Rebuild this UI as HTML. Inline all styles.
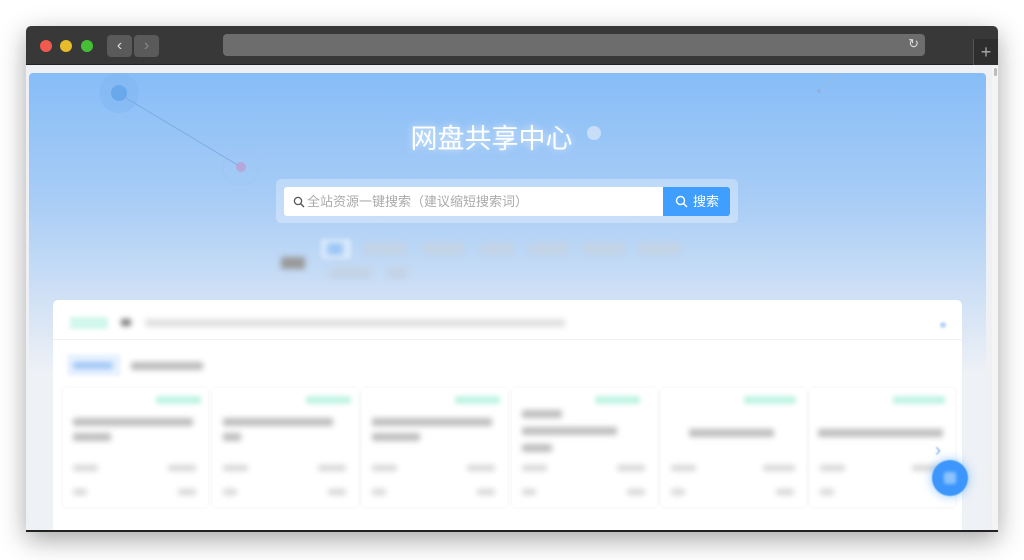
<!DOCTYPE html>
<html><head><meta charset="utf-8"><style>
*{margin:0;padding:0;box-sizing:border-box}
body{width:1024px;height:560px;background:#fff;position:relative;overflow:hidden;font-family:"Liberation Sans","Noto Sans CJK SC",sans-serif}
.win{position:absolute;left:26px;top:26px;width:972px;height:506px;background:#eef0f4;box-shadow:0 8px 26px rgba(0,0,0,.35);border-radius:5px 5px 0 0;overflow:hidden}
.bar{position:absolute;left:0;top:0;width:972px;height:39px;background:#383838;border-bottom:1px solid #222}
.dot{position:absolute;top:14px;width:12px;height:12px;border-radius:50%}
.nav{position:absolute;top:9px;width:25px;height:22px;background:#5a5a5a;border-radius:4px;color:#ddd;font-size:16px;text-align:center;line-height:21px}
.url{position:absolute;left:197px;top:8px;width:702px;height:22px;background:#6d6d6d;border-radius:4px}
.plus{position:absolute;left:947px;top:13px;width:25px;height:26px;background:#2e2e2e;border-left:1px solid #555;color:#aaa;font-size:18px;text-align:center;line-height:26px}
.hero{position:absolute;left:3px;top:47px;width:957px;height:460px;background:linear-gradient(#87bdf7 0px,#a9cdf6 130px,#dae6f5 250px,#eef1f6 300px);border-radius:4px}
.title{position:absolute;left:-16px;width:100%;top:44px;text-align:center;color:#fff;font-size:27px;letter-spacing:0px;text-shadow:0 0 8px rgba(255,255,255,.7)}
.sbox{position:absolute;left:247px;top:106px;width:462px;height:44px;background:rgba(255,255,255,.3);border-radius:5px}
.inp{position:absolute;left:8px;top:8px;width:380px;height:29px;background:#fff;border-radius:3px 0 0 3px;color:#aaa;font-size:13px;line-height:29px;padding-left:23px}
.btn{position:absolute;left:387px;top:8px;width:67px;height:29px;background:#409eff;border-radius:0 3px 3px 0;color:#fff;font-size:13px;line-height:29px;padding-left:30px}
.tag{position:absolute;height:12px;background:#c3d3e6;border-radius:2px;filter:blur(3px)}
.panel{position:absolute;left:27px;top:227px;width:909px;height:240px;background:#fff;border-radius:5px}
.card{position:absolute;top:88px;width:145px;height:119px;background:#fff;box-shadow:0 0 5px rgba(0,0,0,.06);border-radius:4px}
.g{position:absolute;background:#d6d6d6;filter:blur(2.8px);border-radius:2px}
.gr{position:absolute;background:#c2f4e5;filter:blur(2.5px);border-radius:2px}
</style></head><body>
<div class="win">
 <div class="bar">
  <div class="dot" style="left:14px;background:#f05a4f"></div>
  <div class="dot" style="left:34px;background:#e5bc2a"></div>
  <div class="dot" style="left:55px;background:#45c035"></div>
  <div class="nav" style="left:81px">&#8249;</div>
  <div class="nav" style="left:108px;color:#888">&#8250;</div>
  <div class="url"><span style="position:absolute;right:6px;top:2px;color:#ddd;font-size:13px">&#8635;</span></div>
  <div class="plus">+</div>
 </div>
 <div style="position:absolute;right:0;top:40px;width:6px;height:466px;background:#f4f4f4"></div>
 <div style="position:absolute;right:1px;top:42px;width:3px;height:8px;background:#bbb;border-radius:2px"></div>
 <div class="hero">
  <svg width="957" height="300" style="position:absolute;left:0;top:0">
   <circle cx="90" cy="20" r="20" fill="#7fb6f2" opacity=".5"/>
   <circle cx="90" cy="20" r="8" fill="#6aa8ec"/>
   <line x1="92" y1="22" x2="212" y2="94" stroke="#7aa7e0" stroke-width=".8"/>
   <circle cx="212" cy="94" r="18" fill="none" stroke="#9fc3ee" stroke-width=".6"/>
   <circle cx="212" cy="94" r="5" fill="#b4a8d9"/>
   <circle cx="565" cy="60" r="7" fill="#c8def8"/>
   <circle cx="790" cy="18" r="2" fill="#8fb0db"/>
   <line x1="790" y1="18" x2="815" y2="-5" stroke="#9fbce2" stroke-width=".6"/>
  </svg>
  <div class="title">网盘共享中心</div>
  <div class="sbox">
   <div class="inp"><svg width="12" height="12" style="position:absolute;left:9px;top:9px"><circle cx="5" cy="5" r="3.6" fill="none" stroke="#555" stroke-width="1.3"/><line x1="7.7" y1="7.7" x2="11" y2="11" stroke="#555" stroke-width="1.4"/></svg>全站资源一键搜索（建议缩短搜索词）</div>
   <div class="btn"><svg width="13" height="13" style="position:absolute;left:12px;top:8px"><circle cx="5.5" cy="5.5" r="4" fill="none" stroke="#fff" stroke-width="1.4"/><line x1="8.5" y1="8.5" x2="12" y2="12" stroke="#fff" stroke-width="1.5"/></svg>搜索</div>
  </div>
  <div class="tag" style="left:252px;top:184px;width:24px;background:#999"></div>
  <div style="position:absolute;left:292px;top:166px;width:30px;height:20px;background:#d9e9fc;border-radius:3px;filter:blur(2px)"></div>
  <div class="tag" style="left:298px;top:170px;width:16px;background:#9cc6f5"></div>
  <div class="tag" style="left:335px;top:170px;width:42px"></div>
  <div class="tag" style="left:393px;top:170px;width:42px"></div>
  <div class="tag" style="left:452px;top:170px;width:32px"></div>
  <div class="tag" style="left:500px;top:170px;width:40px"></div>
  <div class="tag" style="left:553px;top:170px;width:42px"></div>
  <div class="tag" style="left:610px;top:170px;width:42px"></div>
  <div class="tag" style="left:300px;top:194px;width:42px"></div>
  <div class="tag" style="left:358px;top:194px;width:20px"></div>
 </div>
 <div class="panel" style="left:27px;top:274px">
  <div style="position:absolute;left:0;top:0;width:909px;height:40px;border-bottom:1px solid #f2f2f2"></div>
  <div style="position:absolute;left:17px;top:17px;width:38px;height:12px;background:#d2f7ec;filter:blur(2px)"></div>
  <div class="g" style="left:68px;top:19px;width:10px;height:7px;background:#777"></div>
  <div class="g" style="left:92px;top:19px;width:420px;height:8px;background:#e0e0e0"></div>
  <div style="position:absolute;left:887px;top:22px;width:6px;height:6px;background:#b8d4f8;border-radius:50%;filter:blur(1px)"></div>
  <div style="position:absolute;left:14px;top:54px;width:54px;height:22px;background:#eaf3ff;border-radius:3px;filter:blur(1.5px)"></div>
  <div class="g" style="left:20px;top:62px;width:40px;height:7px;background:#9cc4f5"></div>
  <div class="g" style="left:78px;top:62px;width:72px;height:8px;background:#bbb"></div>
 </div>
</div>
<div class="card" style="left:63px;top:388px"><div class="gr" style="left:93px;top:8px;width:45px;height:8px"></div><div class="g" style="left:10px;top:30px;width:120px;height:8px;background:#bdbdbd"></div><div class="g" style="left:10px;top:45px;width:38px;height:8px;background:#bdbdbd"></div><div class="g" style="left:10px;top:77px;width:25px;height:6px"></div><div class="g" style="left:105px;top:77px;width:28px;height:6px"></div><div class="g" style="left:10px;top:101px;width:14px;height:6px"></div><div class="g" style="left:115px;top:101px;width:18px;height:6px"></div></div>
<div class="card" style="left:213px;top:388px"><div class="gr" style="left:93px;top:8px;width:45px;height:8px"></div><div class="g" style="left:10px;top:30px;width:110px;height:8px;background:#bdbdbd"></div><div class="g" style="left:10px;top:45px;width:18px;height:8px;background:#bdbdbd"></div><div class="g" style="left:10px;top:77px;width:25px;height:6px"></div><div class="g" style="left:105px;top:77px;width:28px;height:6px"></div><div class="g" style="left:10px;top:101px;width:14px;height:6px"></div><div class="g" style="left:115px;top:101px;width:18px;height:6px"></div></div>
<div class="card" style="left:362px;top:388px"><div class="gr" style="left:93px;top:8px;width:45px;height:8px"></div><div class="g" style="left:10px;top:30px;width:120px;height:8px;background:#bdbdbd"></div><div class="g" style="left:10px;top:45px;width:48px;height:8px;background:#bdbdbd"></div><div class="g" style="left:10px;top:77px;width:25px;height:6px"></div><div class="g" style="left:105px;top:77px;width:28px;height:6px"></div><div class="g" style="left:10px;top:101px;width:14px;height:6px"></div><div class="g" style="left:115px;top:101px;width:18px;height:6px"></div></div>
<div class="card" style="left:512px;top:388px"><div class="gr" style="left:83px;top:8px;width:45px;height:8px"></div><div class="g" style="left:10px;top:22px;width:40px;height:8px;background:#bdbdbd"></div><div class="g" style="left:10px;top:39px;width:95px;height:8px;background:#bdbdbd"></div><div class="g" style="left:10px;top:56px;width:30px;height:8px;background:#bdbdbd"></div><div class="g" style="left:10px;top:77px;width:25px;height:6px"></div><div class="g" style="left:105px;top:77px;width:28px;height:6px"></div><div class="g" style="left:10px;top:101px;width:14px;height:6px"></div><div class="g" style="left:115px;top:101px;width:18px;height:6px"></div></div>
<div class="card" style="left:661px;top:388px"><div class="gr" style="left:83px;top:8px;width:52px;height:8px"></div><div class="g" style="left:28px;top:41px;width:85px;height:8px;background:#bdbdbd"></div><div class="g" style="left:10px;top:77px;width:25px;height:6px"></div><div class="g" style="left:102px;top:77px;width:32px;height:6px"></div><div class="g" style="left:10px;top:101px;width:14px;height:6px"></div><div class="g" style="left:115px;top:101px;width:18px;height:6px"></div></div>
<div class="card" style="left:810px;top:388px"><div class="gr" style="left:83px;top:8px;width:52px;height:8px"></div><div class="g" style="left:8px;top:41px;width:125px;height:8px;background:#bdbdbd"></div><div class="g" style="left:10px;top:77px;width:25px;height:6px"></div><div class="g" style="left:102px;top:77px;width:32px;height:6px"></div><div class="g" style="left:10px;top:101px;width:14px;height:6px"></div></div>
<div style="position:absolute;left:935px;top:440px;color:#7ab0f0;font-size:18px;filter:blur(.8px)">&#8250;</div>
<div style="position:absolute;left:932px;top:460px;width:36px;height:36px;border-radius:50%;background:#3c96fb;box-shadow:0 0 10px rgba(64,158,255,.6);filter:blur(.6px)"><div style="position:absolute;left:12px;top:12px;width:12px;height:12px;background:#8cc3ff;border-radius:2px;filter:blur(1.5px)"></div></div>
<div style="position:absolute;left:26px;top:530px;width:972px;height:2px;background:#222"></div>
</body></html>
